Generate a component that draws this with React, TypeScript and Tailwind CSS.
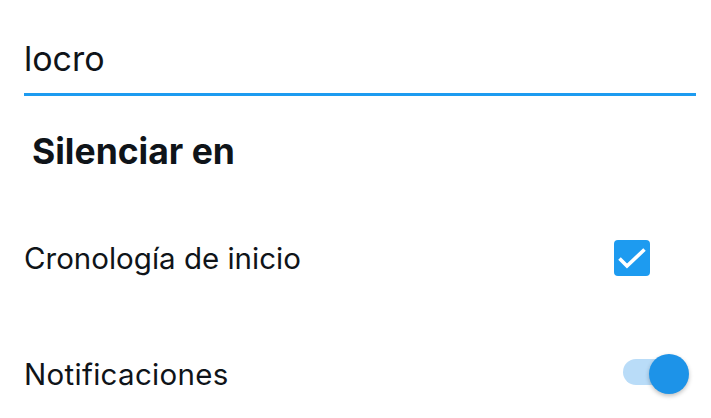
import React from "react";

export default function App() {
  return (
    <div
      className="w-[711px] h-[418px] overflow-hidden bg-white text-[#0f1419]"
      style={{ fontFamily: "Inter, 'Noto Sans', sans-serif" }}
    >
      <div className="pl-6 pr-[15px] pt-[39px]">
        <div className="text-[34px] leading-[40px] pb-[14px] border-b-[3px] border-[#1d9bf0]">
          locro
        </div>
      </div>
      <div className="px-8 mt-[36px] text-[35.5px] leading-[40px] font-bold">
        Silenciar en
      </div>
      <div className="mt-[28px]">
        <div className="flex items-center justify-between h-[116px] pl-6 pr-[61px]">
          <span className="text-[29.5px] leading-[36px]">Cronología de inicio</span>
          <div className="w-9 h-9 rounded-[4px] bg-[#1d9bf0] flex items-center justify-center">
            <svg width="30" height="30" viewBox="0 0 30 30" fill="none">
              <path d="M2.5 15.5l7.5 7.5L27.5 6.5" stroke="white" strokeWidth="3.6" strokeLinecap="butt" strokeLinejoin="miter" />
            </svg>
          </div>
        </div>
        <div className="flex items-center justify-between h-[116px] pl-6 pr-[22px]">
          <span className="text-[29.5px] leading-[36px] tracking-[0.3px]">Notificaciones</span>
          <div className="relative w-[66px] h-10">
            <div className="absolute left-0 top-[5px] w-[52px] h-[26px] rounded-full bg-[#b9dcf8]" />
            <div className="absolute right-0 top-0 w-10 h-10 rounded-full bg-[#1d93e8] shadow-[0_2px_4px_rgba(0,0,0,0.25)]" />
          </div>
        </div>
      </div>
    </div>
  );
}
